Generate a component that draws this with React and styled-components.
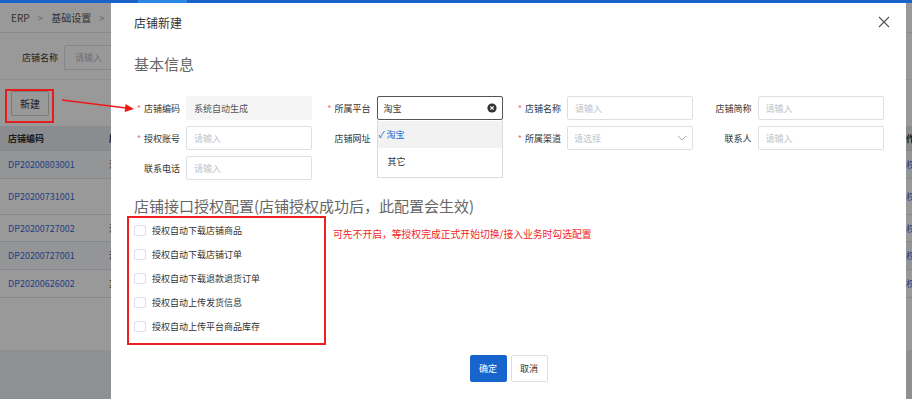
import React from 'react';
import styled, { createGlobalStyle } from 'styled-components';

const Global = createGlobalStyle`
  html, body { margin: 0; padding: 0; width: 912px; height: 399px; overflow: hidden; background: #fff; }
  body { font-family: "Noto Sans CJK SC", "Noto Sans", sans-serif; color: #333; }
  * { box-sizing: border-box; }
`;

/* ---------- background page ---------- */
const Page = styled.div`
  width: 912px; height: 399px; display: flex; flex-direction: column; background: #eef0f3;
`;
const TopBar = styled.div`
  height: 3px; background: #1b62c9; padding-left: 138px; position: relative; z-index: 30; flex: none;
`;
const TopBarActive = styled.div`
  width: 49px; height: 3px; background: #2a88e4;
`;
const Crumbs = styled.div`
  height: 30px; display: flex; align-items: center; gap: 8px; padding-left: 11px;
  background: #fff; border-bottom: 1px solid #e6e6e6; font-size: 10px; color: #555; flex: none;
`;
const Sep = styled.span` color: #aaa; `;
const SearchBar = styled.div`
  height: 47px; display: flex; align-items: center; padding: 3px 0 0 22px; gap: 6px;
  background: #fff; border-bottom: 1px solid #eee; flex: none;
`;
const SearchLabel = styled.span` font-size: 9px; color: #333; `;
const SearchInput = styled.div`
  width: 120px; height: 25px; border: 1px solid #dcdfe6; border-radius: 2px;
  font-size: 9px; color: #bbb; display: flex; align-items: center; padding-left: 10px;
`;
const Toolbar = styled.div`
  height: 46px; display: flex; align-items: center; padding-left: 11px; background: #fff; flex: none;
`;
const PlainButton = styled.div`
  width: 38px; height: 25px; border: 1px solid #cfcfcf; border-radius: 2px; font-size: 10px;
  display: flex; align-items: center; justify-content: center; color: #333; background: #fff;
`;
const TableRow = styled.div`
  display: grid; grid-template-columns: 101px 1fr 15px; align-items: center;
  height: ${p => p.$h}px; padding-left: 8px; font-size: 9px; white-space: nowrap;
  background: ${p => (p.$head ? '#e6eaef' : p.$alt ? '#f7f8fa' : '#fff')};
  border-bottom: 1px solid #dfe3e8; flex: none;
  font-weight: ${p => (p.$head ? 700 : 400)};
`;
const Code = styled.span` color: #3b6ad6; `;
const Action = styled.span` color: #3b6ad6; `;
const TableFill = styled.div` height: 52px; background: #fff; flex: none; `;

/* ---------- overlay + modal ---------- */
const Mask = styled.div`
  position: fixed; left: 0; right: 0; top: 3px; bottom: 0; background: rgba(0, 0, 0, 0.4); z-index: 10;
`;
const Modal = styled.div`
  position: fixed; left: 111px; top: 3px; width: 795px; bottom: 0; background: #fff; z-index: 20;
  display: flex; flex-direction: column;
`;
const Header = styled.div`
  height: 38px; display: flex; align-items: center; justify-content: space-between;
  padding: 0 16px 0 23px; flex: none;
`;
const Title = styled.div` font-size: 12px; color: #333; `;
const SectionTitle = styled.div`
  font-size: 15px; line-height: 20px; color: #666; padding-left: 23px;
  margin-top: ${p => p.$mt}px; white-space: nowrap;
`;
const Grid = styled.div`
  display: grid; grid-template-columns: repeat(4, 190.5px); grid-auto-rows: 24px; row-gap: 6px;
  padding-left: 11px; margin-top: 22px;
`;
const Field = styled.div` display: flex; align-items: center; position: relative; `;
const Label = styled.label`
  width: 64px; text-align: right; padding-right: 6px; font-size: 9px; color: #333; white-space: nowrap;
`;
const Req = styled.span` color: #f56c6c; margin-right: 3px; `;
const TextInput = styled.input`
  width: 126px; height: 24px; border-radius: 2px; padding: 0 7px; font-family: inherit; font-size: 9px;
  color: #555; outline: none;
  border: 1px solid ${p => (p.readOnly ? '#f5f5f5' : '#dcdfe6')};
  background: ${p => (p.readOnly ? '#f5f5f5' : '#fff')};
  &::placeholder { color: #c0c4cc; }
`;
const SelectBox = styled.div`
  width: 126px; height: 24px; border-radius: 2px; padding: 0 5px 0 6px; font-size: 9px;
  display: flex; align-items: center; justify-content: space-between;
  border: 1px solid ${p => (p.$focus ? '#555' : '#dcdfe6')};
  color: ${p => (p.$placeholder ? '#c0c4cc' : '#333')};
`;
const Dropdown = styled.div`
  position: absolute; left: 64px; top: 24px; width: 126px; background: #fff;
  border: 1px solid #dcdcdc; border-top: none; padding: 1px 0 2px; z-index: 5;
`;
const Option = styled.div`
  height: 27px; display: flex; align-items: center; padding-left: 10px; font-size: 9px;
  background: ${p => (p.$active ? '#f2f2f2' : '#fff')};
  color: ${p => (p.$active ? '#1a66d1' : '#333')};
`;
const Tick = styled.span` margin-left: -9px; width: 8px; `;

const AuthRow = styled.div` display: flex; align-items: flex-start; padding-left: 16px; flex: none; `;
const AuthBox = styled.div`
  width: 199px; height: 129px; border: 2px solid #f01e1e; padding-left: 5px;
  display: flex; flex-direction: column;
`;
const CheckRow = styled.label`
  height: 24px; display: flex; align-items: center; gap: 6px; font-size: 9px; color: #333;
`;
const CheckBox = styled.span`
  width: 12px; height: 11px; border: 1px solid #dcdfe6; border-radius: 2px; background: #fff;
`;
const Note = styled.div`
  margin: 12px 0 0 7px; font-size: 9.8px; line-height: 12px; color: #f31d1d; white-space: nowrap;
`;
const Footer = styled.div` display: flex; justify-content: center; gap: 4px; margin-top: 10px; `;
const Btn = styled.button`
  width: 37px; height: 27px; border-radius: 2px; font-family: inherit; font-size: 9px; padding: 0;
  background: ${p => (p.$primary ? '#1764cc' : '#fff')};
  color: ${p => (p.$primary ? '#fff' : '#333')};
  border: 1px solid ${p => (p.$primary ? '#1764cc' : '#dcdfe6')};
`;
const Annot = styled.svg`
  position: fixed; left: 0; top: 0; width: 912px; height: 399px; z-index: 40; pointer-events: none;
`;

const rows = [
  { code: 'DP20200803001', h: 28, alt: true, other: '淘宝' },
  { code: 'DP20200731001', h: 36, other: '' },
  { code: 'DP20200727002', h: 27, other: '淘宝' },
  { code: 'DP20200727001', h: 28, alt: true, other: '淘宝' },
  { code: 'DP20200626002', h: 28, other: '其它' },
];

const checks = [
  '授权自动下载店铺商品',
  '授权自动下载店铺订单',
  '授权自动下载退款退货订单',
  '授权自动上传发货信息',
  '授权自动上传平台商品库存',
];

const Close = () => (
  <svg width="12" height="12" viewBox="0 0 12 12">
    <path d="M1 1L11 11M11 1L1 11" stroke="#555" strokeWidth="1.1" fill="none" />
  </svg>
);
const ClearIcon = () => (
  <svg width="10" height="10" viewBox="0 0 10 10">
    <circle cx="5" cy="5" r="4.6" fill="#333" />
    <path d="M3.3 3.3L6.7 6.7M6.7 3.3L3.3 6.7" stroke="#fff" strokeWidth="1.1" />
  </svg>
);
const Chevron = () => (
  <svg width="10" height="6" viewBox="0 0 10 6">
    <path d="M1 1L5 5L9 1" stroke="#aaa" strokeWidth="1" fill="none" />
  </svg>
);

export default function App() {
  return (
    <>
      <Global />
      <Page>
        <TopBar><TopBarActive /></TopBar>
        <Crumbs>
          <span>ERP</span><Sep>&gt;</Sep><span>基础设置</span><Sep>&gt;</Sep><span>店铺管理</span>
        </Crumbs>
        <SearchBar>
          <SearchLabel>店铺名称</SearchLabel>
          <SearchInput>请输入</SearchInput>
        </SearchBar>
        <Toolbar><PlainButton>新建</PlainButton></Toolbar>
        <TableRow $head $h={25}><span>店铺编码</span><span>所属平台</span><span>操作</span></TableRow>
        {rows.map(r => (
          <TableRow key={r.code} $h={r.h} $alt={r.alt}>
            <Code>{r.code}</Code><span>{r.other}</span><Action>授权</Action>
          </TableRow>
        ))}
        <TableFill />
      </Page>

      <Mask />
      <Modal>
        <Header>
          <Title>店铺新建</Title>
          <Close />
        </Header>
        <SectionTitle $mt={13}>基本信息</SectionTitle>
        <Grid>
          <Field><Label><Req>*</Req>店铺编码</Label><TextInput readOnly value="系统自动生成" /></Field>
          <Field>
            <Label><Req>*</Req>所属平台</Label>
            <SelectBox $focus><span>淘宝</span><ClearIcon /></SelectBox>
            <Dropdown>
              <Option $active><Tick>✓</Tick>淘宝</Option>
              <Option>其它</Option>
            </Dropdown>
          </Field>
          <Field><Label><Req>*</Req>店铺名称</Label><TextInput placeholder="请输入" /></Field>
          <Field><Label>店铺简称</Label><TextInput placeholder="请输入" /></Field>

          <Field><Label><Req>*</Req>授权账号</Label><TextInput placeholder="请输入" /></Field>
          <Field style={{ zIndex: 0 }}><Label>店铺网址</Label><TextInput placeholder="请输入" /></Field>
          <Field><Label><Req>*</Req>所属渠道</Label><SelectBox $placeholder><span>请选择</span><Chevron /></SelectBox></Field>
          <Field><Label>联系人</Label><TextInput placeholder="请输入" /></Field>

          <Field><Label>联系电话</Label><TextInput placeholder="请输入" /></Field>
        </Grid>
        <SectionTitle $mt={16}>店铺接口授权配置(店铺授权成功后，此配置会生效)</SectionTitle>
        <AuthRow>
          <AuthBox>
            {checks.map(c => (
              <CheckRow key={c}><CheckBox />{c}</CheckRow>
            ))}
          </AuthBox>
          <Note>可先不开启，等授权完成正式开始切换/接入业务时勾选配置</Note>
        </AuthRow>
        <Footer>
          <Btn $primary>确定</Btn>
          <Btn>取消</Btn>
        </Footer>
      </Modal>

      <Annot viewBox="0 0 912 399">
        <rect x="6" y="90" width="47" height="32" fill="none" stroke="#e51c1c" strokeWidth="2" />
        <line x1="62" y1="100" x2="126" y2="108" stroke="#f01818" strokeWidth="1.6" />
        <polygon points="134,109 125.6,103.9 124.6,111.9" fill="#f01818" />
      </Annot>
    </>
  );
}
